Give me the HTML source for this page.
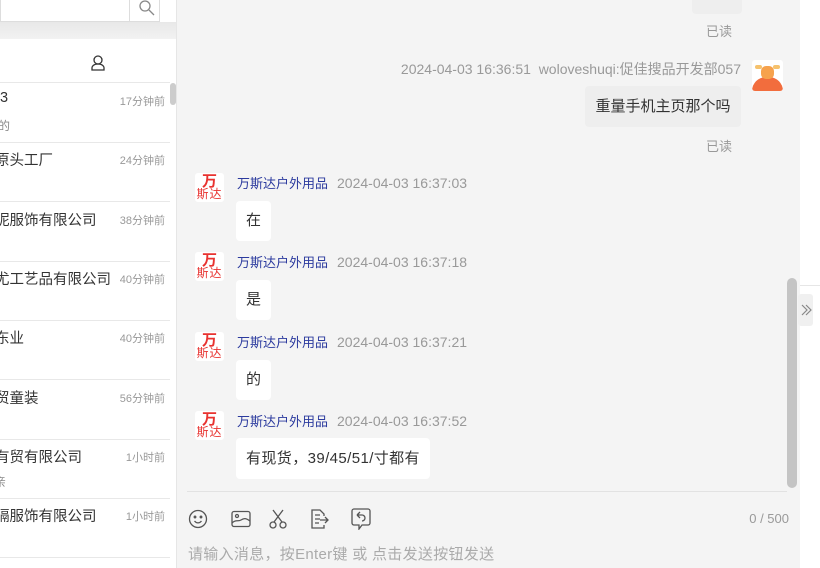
<!DOCTYPE html>
<html><head><meta charset="utf-8">
<style>
*{margin:0;padding:0;box-sizing:border-box}
body{width:820px;height:568px;overflow:hidden;background:#fff;font-family:"Liberation Sans","Noto Sans CJK SC",sans-serif;position:relative}
.a{position:absolute;white-space:nowrap}
#left{position:absolute;left:0;top:0;width:177px;height:568px;background:#fff;border-right:1px solid #e6e6e6;overflow:hidden}
.item{position:absolute;left:0;width:170px;height:60px;border-bottom:1px solid #e8e8e8}
.nm{position:absolute;top:7px;font-size:14.5px;color:#333;white-space:nowrap}
.tm{position:absolute;right:5px;top:10px;font-size:11px;color:#999}
.sub{position:absolute;top:34px;left:-2px;font-size:12px;color:#888}
#chat{position:absolute;left:177px;top:0;width:623px;height:568px;background:#f4f4f4}
.av{position:absolute;width:29px;height:29px;background:#fff;border-radius:3px;color:#e8322f;text-align:center;line-height:1}
.av b{display:block;font-size:15px;font-weight:bold;margin-top:1px}
.av i{display:block;font-size:12px;font-style:normal;letter-spacing:1px;margin-top:-1px}
.name{font-size:13px;color:#2b3a9e}
.time{font-size:14px;color:#999;margin-left:9px}
.bub{position:absolute;background:#fff;border-radius:4px;font-size:15px;color:#333;height:40px;line-height:40px;padding:0 10px}
</style></head><body>
<div id="left">
  <div class="a" style="left:0;top:0;width:160px;height:22px;border:1px solid #ddd;border-top:none;background:#fff"></div>
  <div class="a" style="left:129px;top:0;width:1px;height:22px;background:#ddd"></div>
  <svg class="a" style="left:138px;top:0" width="18" height="16" viewBox="0 0 18 16"><circle cx="7" cy="6" r="5" fill="none" stroke="#888" stroke-width="1.3"/><path d="M11 10l5 5" stroke="#888" stroke-width="1.3"/></svg>
  <div class="a" style="left:0;top:22px;width:177px;height:17px;background:linear-gradient(#e8e8e8,#f2f2f2)"></div>
  <svg class="a" style="left:90px;top:54px" width="16" height="18" viewBox="0 0 16 18"><circle cx="8" cy="6" r="4" fill="none" stroke="#333" stroke-width="1.3"/><path d="M8 10c-4 0-6 2-6 4v2h12v-2c0-2-2-4-6-4" fill="none" stroke="#333" stroke-width="1.3"/></svg>
  <div class="a" style="left:0;top:82px;width:170px;height:1px;background:#e8e8e8"></div>
  <div class="item" style="top:83px"><div class="nm" style="left:0">3</div><div class="tm">17分钟前</div><div class="sub">的</div></div>
  <div class="item" style="top:142px"><div class="nm" style="left:-5px">原头工厂</div><div class="tm">24分钟前</div></div>
  <div class="item" style="top:202px"><div class="nm" style="left:-5px">昵服饰有限公司</div><div class="tm">38分钟前</div></div>
  <div class="item" style="top:261px"><div class="nm" style="left:-5px">尤工艺品有限公司</div><div class="tm">40分钟前</div></div>
  <div class="item" style="top:320px"><div class="nm" style="left:-5px">东业</div><div class="tm">40分钟前</div></div>
  <div class="item" style="top:380px"><div class="nm" style="left:-5px">贸童装</div><div class="tm">56分钟前</div></div>
  <div class="item" style="top:439px"><div class="nm" style="left:-5px">有贸有限公司</div><div class="tm">1小时前</div><div class="sub" style="left:-6px">亲</div></div>
  <div class="item" style="top:498px"><div class="nm" style="left:-5px">膈服饰有限公司</div><div class="tm">1小时前</div></div>
  <div class="a" style="left:170px;top:83px;width:6px;height:22px;background:#ccc;border-radius:3px"></div>
</div>
<div id="chat">
  <div class="a" style="left:515px;top:0;width:50px;height:14px;background:#eee;border-radius:0 0 4px 4px"></div>
  <div class="a" style="left:529px;top:21px;font-size:13px;color:#999">已读</div>
  <div class="a" style="right:59px;top:59px;font-size:14px;color:#999">2024-04-03 16:36:51&nbsp;&nbsp;woloveshuqi:促佳搜品开发部057</div>
  <div class="a" style="left:575px;top:60px;width:31px;height:31px;background:#fff;border-radius:3px;overflow:hidden">
    <div class="a" style="left:0;top:17px;width:31px;height:18px;background:#f26d3d;border-radius:14px 14px 0 0"></div>
    <div class="a" style="left:9px;top:6px;width:13px;height:13px;background:#f6a24d;border-radius:5px"></div>
    <div class="a" style="left:3px;top:5px;width:7px;height:4px;background:#f6c26d;border-radius:2px"></div>
    <div class="a" style="left:21px;top:5px;width:7px;height:4px;background:#f6c26d;border-radius:2px"></div>
  </div>
  <div class="bub" style="left:408px;top:86px;width:156px;height:41px;line-height:41px;background:#eeeeee;text-align:center;padding:0">重量手机主页那个吗</div>
  <div class="a" style="left:529px;top:136px;font-size:13px;color:#999">已读</div>

  <div class="av" style="left:18px;top:173px"><b>万</b><i>斯达</i></div>
  <div class="a" style="left:60px;top:173px"><span class="name">万斯达户外用品</span><span class="time">2024-04-03 16:37:03</span></div>
  <div class="bub" style="left:59px;top:201px">在</div>

  <div class="av" style="left:18px;top:252px"><b>万</b><i>斯达</i></div>
  <div class="a" style="left:60px;top:252px"><span class="name">万斯达户外用品</span><span class="time">2024-04-03 16:37:18</span></div>
  <div class="bub" style="left:59px;top:280px">是</div>

  <div class="av" style="left:18px;top:332px"><b>万</b><i>斯达</i></div>
  <div class="a" style="left:60px;top:332px"><span class="name">万斯达户外用品</span><span class="time">2024-04-03 16:37:21</span></div>
  <div class="bub" style="left:59px;top:360px">的</div>

  <div class="av" style="left:18px;top:411px"><b>万</b><i>斯达</i></div>
  <div class="a" style="left:60px;top:411px"><span class="name">万斯达户外用品</span><span class="time">2024-04-03 16:37:52</span></div>
  <div class="bub" style="left:59px;top:438px;height:41px;line-height:41px;letter-spacing:0.4px">有现货，39/45/51/寸都有</div>

  <div class="a" style="left:610px;top:278px;width:10px;height:210px;background:#c4c4c4;border-radius:5px"></div>
  <div class="a" style="left:10px;top:491px;width:600px;height:1px;background:#e2e2e2"></div>

  <svg class="a" style="left:11px;top:509px" width="20" height="20" viewBox="0 0 20 20" fill="none" stroke="#555" stroke-width="1.3"><circle cx="10" cy="10" r="8.5"/><circle cx="7" cy="8" r=".8" fill="#555"/><circle cx="13" cy="8" r=".8" fill="#555"/><path d="M6.5 12c2 2.5 5 2.5 7 0"/></svg>
  <svg class="a" style="left:54px;top:510px" width="20" height="18" viewBox="0 0 20 18" fill="none" stroke="#555" stroke-width="1.3"><rect x="1" y="1.5" width="18" height="15" rx="2"/><circle cx="6" cy="6" r="1.5"/><path d="M1 13c4-4 6-1 9-3s5-2 9 1"/></svg>
  <svg class="a" style="left:91px;top:509px" width="20" height="20" viewBox="0 0 20 20" fill="none" stroke="#555" stroke-width="1.3"><path d="M5 1l9 12M15 1L6 13"/><circle cx="5" cy="16" r="3"/><circle cx="15" cy="16" r="3"/></svg>
  <svg class="a" style="left:133px;top:509px" width="20" height="20" viewBox="0 0 20 20" fill="none" stroke="#555" stroke-width="1.3"><path d="M14 7V5l-4-4H2v18h12v-3"/><path d="M5 6h5M5 10h5M5 14h4M10 11h8M15 8l3 3-3 3"/></svg>
  <svg class="a" style="left:174px;top:508px" width="20" height="22" viewBox="0 0 20 22" fill="none" stroke="#555" stroke-width="1.3"><path d="M3 1h14a2 2 0 012 2v12a2 2 0 01-2 2h-6l-3 4v-4H3a2 2 0 01-2-2V3a2 2 0 012-2z"/><path d="M6 7l3-3M6 7l3 3M6 7h5a3 3 0 010 6"/></svg>
  <div class="a" style="right:11px;top:511px;font-size:13px;color:#999">0 / 500</div>
  <div class="a" style="left:11px;top:543px;font-size:15px;color:#aaa;letter-spacing:0.3px">请输入消息，按Enter键 或 点击发送按钮发送</div>
</div>
<div class="a" style="left:800px;top:285px;width:20px;height:1px;background:#e6e6e6"></div>
<div class="a" style="left:798px;top:294px;width:15px;height:32px;background:#f0f0f0;border-radius:3px"></div>
<svg class="a" style="left:800px;top:303px" width="12" height="14" viewBox="0 0 12 14" fill="none" stroke="#888" stroke-width="1.2"><path d="M2 2l5 5-5 5M6 2l5 5-5 5"/></svg>
</body></html>
